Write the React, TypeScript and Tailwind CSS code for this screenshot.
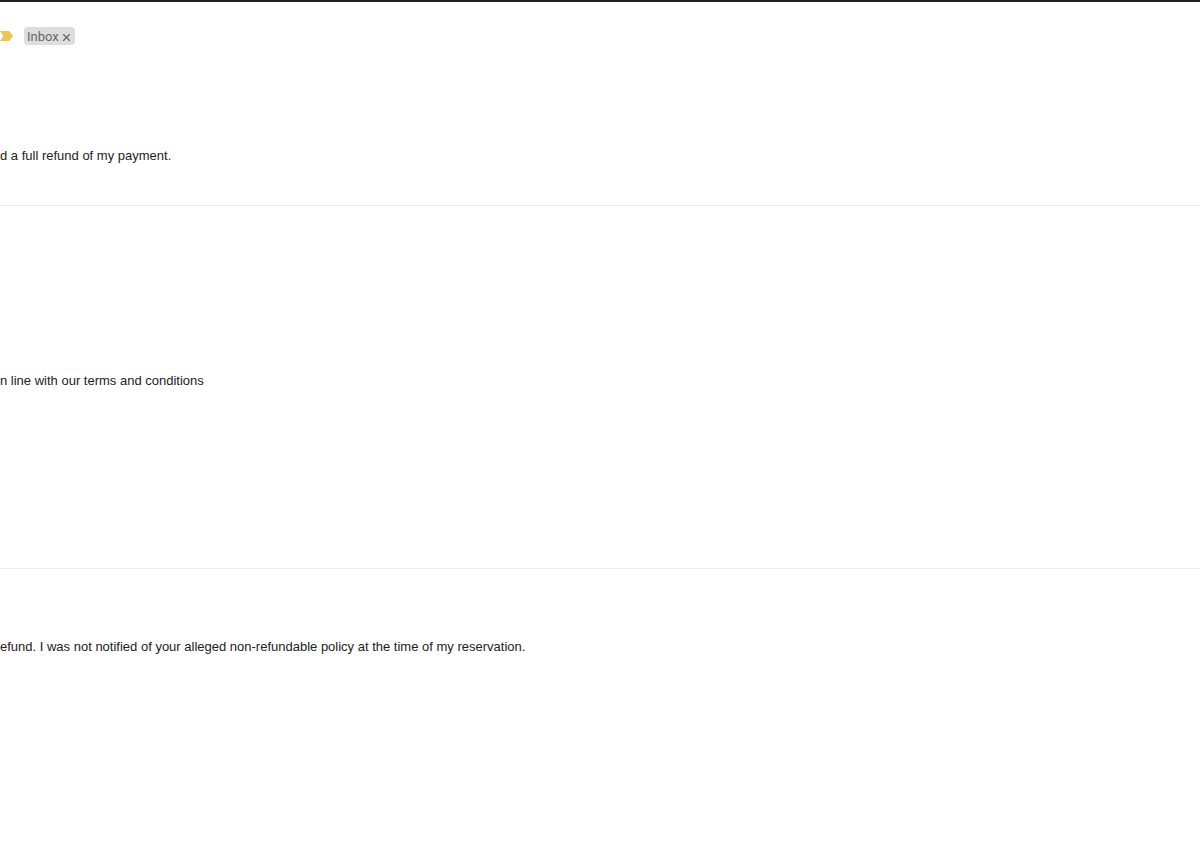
import { X } from "lucide-react";

const messages = [
  { id: 1, text: "d a full refund of my payment.", className: "h-[161px] pt-[101px] border-b" },
  { id: 2, text: "n line with our terms and conditions", className: "h-[363px] pt-[165px] border-b" },
  { id: 3, text: "efund. I was not notified of your alleged non-refundable policy at the time of my reservation.", className: "pt-17" },
];

const App = () => {
  return (
    <main className="min-h-screen overflow-hidden border-t-2 border-[#231f20] bg-white font-['Liberation_Sans',Arial,sans-serif] text-[#222222]">
      {/* Subject line labels */}
      <header className="flex h-[43px] items-end">
        <svg className="mb-[3px] h-3 w-[13px]" viewBox="0 0 13 12" aria-hidden="true">
          <path d="M0 1h8.500q.8 0 1.300.7L13 6l-3.200 4.300q-.5.7-1.300.7H0l3.500-5z" fill="#efc54b" />
        </svg>
        <div className="ml-[11px] flex h-[18px] w-[51px] items-center justify-between rounded bg-[#dddddd] pr-[5px] pl-[3px] font-[Roboto,sans-serif] text-[13px] leading-4 text-[#666666]">
          <span className="pt-0.5">Inbox</span>
          <button type="button" aria-label="Remove label Inbox" className="pt-0.5">
            <X className="h-[7px] w-[7px]" viewBox="5 5 14 14" strokeWidth={2.500} />
          </button>
        </div>
      </header>

      {messages.map((message) => (
        <article key={message.id} className={`border-[#ebebeb] ${message.className}`}>
          <p className="text-[13px] leading-5 whitespace-nowrap">{message.text}</p>
        </article>
      ))}
    </main>
  );
};

export default App;
